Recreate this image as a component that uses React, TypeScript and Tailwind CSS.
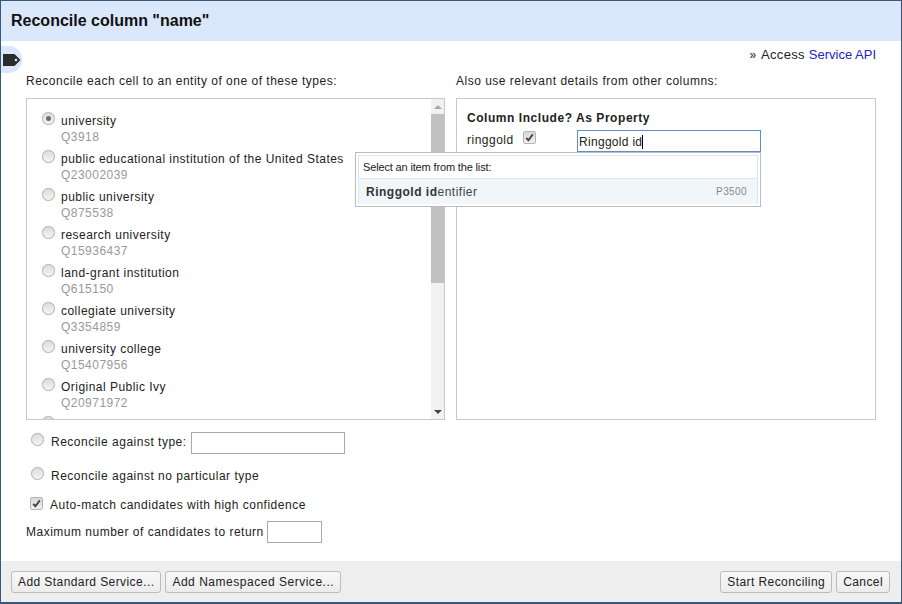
const types = [
  ["university", "Q3918"],
  ["public educational institution of the United States", "Q23002039"],
  ["public university", "Q875538"],
  ["research university", "Q15936437"],
  ["land-grant institution", "Q615150"],
  ["collegiate university", "Q3354859"],
  ["university college", "Q15407956"],
  ["Original Public Ivy", "Q20971972"],
];

function Radio({ checked = false }: { checked?: boolean }) {
  return (
    <span className="flex h-[13px] w-[13px] shrink-0 items-center justify-center rounded-full border border-[#b4b4b4] bg-gradient-to-b from-[#dcdcdc] to-[#f4f4f4] shadow-[0_0_1px_#bbb]">
      {checked && <span className="h-[5px] w-[5px] rounded-full bg-[#6e6e6e]" />}
    </span>
  );
}

function Check() {
  return (
    <span className="flex h-[13px] w-[13px] shrink-0 items-center justify-center rounded-[2px] border border-[#b4b4b4] bg-gradient-to-b from-[#d8d8d8] to-[#f0f0f0]">
      <svg width="9" height="9" viewBox="0 0 9 9">
        <path d="M1.2 4.8 3.4 7.2 7.8 1.4" fill="none" stroke="#444" strokeWidth="1.9" />
      </svg>
    </span>
  );
}

function Btn({ children, wide = false }: { children: string; wide?: boolean }) {
  return (
    <button
      className={
        wide
          ? "h-[22px] rounded-[3px] border border-[#bbb] bg-gradient-to-b from-[#f8f8f8] to-[#ececec] px-[6px] text-[12px] tracking-[0.52px] text-[#222]"
          : "h-[22px] rounded-[3px] border border-[#bbb] bg-gradient-to-b from-[#f8f8f8] to-[#ececec] px-[6px] text-[12px] tracking-[0.42px] text-[#222]"
      }
    >
      {children}
    </button>
  );
}

export default function App() {
  return (
    <div className="relative flex h-[604px] w-[902px] flex-col overflow-hidden border border-b-2 border-[#38597c] bg-white font-['Liberation_Sans',Arial,sans-serif] text-[12px] tracking-[0.5px] text-[#222]">
      <div className="flex h-[40px] shrink-0 items-center bg-[#dbe8fb] pl-[10px] text-[16px] font-bold tracking-normal text-[#111]">
        Reconcile column "name"
      </div>

      {/* tag tab on the left edge */}
      <div className="absolute left-0 top-[45px] flex h-[27px] w-[21px] items-center rounded-r-[13px] bg-[#dbe8fb] pl-[2px]">
        <svg width="18" height="12" viewBox="0 0 18 12">
          <path d="M0 0H11.5L17.5 6 11.5 12H0Z" fill="#2c2c2c" />
          <circle cx="13" cy="6" r="1.3" fill="#dbe8fb" />
        </svg>
      </div>

      <div className="flex h-[22px] shrink-0 items-end justify-end pr-[25px] text-[13px] leading-[16px] tracking-normal">
        <span className="flex gap-[4px]">
          <span className="mr-[1px] text-[12px]">»</span>
          <span className="tracking-[0.3px]">Access</span>
          <a className="text-[#2222cc]">Service API</a>
        </span>
      </div>

      <div className="mt-[11px] flex gap-[11px] pl-[25px]">
        <div className="w-[419px]">
          <div className="h-[24px] leading-[14px] text-[#222]">Reconcile each cell to an entity of one of these types:</div>
          <div className="flex h-[322px] border border-[#c8c8c8]">
            <div className="flex-1 overflow-hidden pl-[15px] pt-[13px]">
              {types.map(([name, id]) => (
                <div key={id} className="flex h-[38px] gap-[6px]">
                  <Radio checked={id === "Q3918"} />
                  <div className="pt-[1px] leading-[16px] tracking-[0.47px]">
                    <div>{name}</div>
                    <div className="text-[#999]">{id}</div>
                  </div>
                </div>
              ))}
              <Radio />
            </div>
            <div className="flex w-[13px] shrink-0 flex-col items-center bg-[#f1f1f1]">
              <div className="flex h-[15px] items-center">
                <div className="h-0 w-0 border-x-[4px] border-b-[4px] border-x-transparent border-b-[#a8a8a8]" />
              </div>
              <div className="h-[169px] w-full bg-[#c1c1c1]" />
              <div className="flex-1" />
              <div className="flex h-[15px] items-center">
                <div className="h-0 w-0 border-x-[4px] border-t-[4px] border-x-transparent border-t-[#444]" />
              </div>
            </div>
          </div>
        </div>

        <div className="w-[420px]">
          <div className="h-[24px] leading-[14px]">Also use relevant details from other columns:</div>
          <div className="h-[322px] border border-[#c8c8c8] pl-[10px] pt-[11px]">
            <div className="font-bold leading-[16px] tracking-[0.55px] text-[#222]">Column Include? As Property</div>
            <div className="mt-[5px] flex items-start">
              <span className="mt-[2px] w-[56px] leading-[15px]">ringgold</span>
              <Check />
              <div className="ml-[41px] flex h-[22px] w-[184px] -translate-y-[1px] items-center border border-[#5b8fd6] pl-[1px] pt-[1px] tracking-[0.3px]">
                Ringgold id<span className="h-[14px] w-px bg-black" />
              </div>
            </div>
          </div>
        </div>
      </div>

      {/* suggest dropdown */}
      <div className="absolute left-[354px] top-[151px] h-[55px] w-[406px] border border-[#bbb] bg-white p-[2px]">
        <div className="h-full border border-[#dde6ee]">
          <div className="flex h-[23px] items-center border-b border-[#dde6ee] pl-[4px] text-[11px] tracking-[-0.15px]">
            Select an item from the list:
          </div>
          <div className="flex h-[25px] items-center justify-between bg-[#f0f6fa] pl-[7px] pr-[10px] text-[#444]">
            <span>
              <b className="text-[#333]">Ringgold id</b>entifier
            </span>
            <span className="text-[10px] tracking-[0.4px] text-[#888]">P3500</span>
          </div>
        </div>
      </div>

      <div className="flex-1 pl-[25px]">
        <div className="ml-[5px] mt-[9px] flex h-[24px] items-center gap-[7px]">
          <div className="-mt-[3px]">
            <Radio />
          </div>
          <span className="mt-[1px]">Reconcile against type:</span>
          <input className="-ml-[3px] mt-[3px] h-[22px] w-[154px] border border-[#aaa] bg-white outline-none" />
        </div>
        <div className="ml-[5px] mt-[12px] flex h-[16px] items-center gap-[7px]">
          <Radio />
          <span className="mt-[6px]">Reconcile against no particular type</span>
        </div>
        <div className="ml-[4px] mt-[14px] flex h-[16px] items-center gap-[7px]">
          <Check />
          <span className="mt-[4px]">Auto-match candidates with high confidence</span>
        </div>
        <div className="mt-[10px] flex items-center gap-[3px]">
          <span>Maximum number of candidates to return</span>
          <input className="h-[22px] w-[55px] border border-[#aaa] bg-white outline-none" />
        </div>
      </div>

      <div className="flex h-[41px] shrink-0 items-center justify-between bg-[#eeeeee] pl-[10px] pr-[11px]">
        <div className="flex gap-[4px]">
          <Btn>Add Standard Service...</Btn>
          <Btn wide>Add Namespaced Service...</Btn>
        </div>
        <div className="flex gap-[4px]">
          <Btn>Start Reconciling</Btn>
          <Btn>Cancel</Btn>
        </div>
      </div>
    </div>
  );
}
